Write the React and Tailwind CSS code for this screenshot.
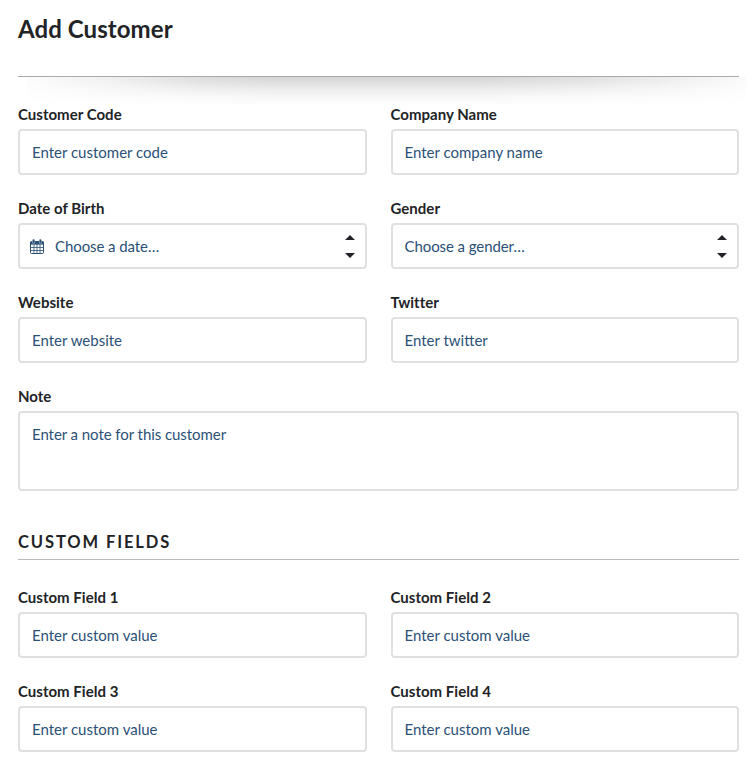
const inputClass =
  "block w-full rounded border-2 border-[#e0e0e0] bg-white px-3 text-[15px] text-[#2b5177] outline-none placeholder:text-[#2b5177] placeholder:opacity-100"

function Label({ children }) {
  return <div className="h-[23px] text-[15px] leading-[17px] font-bold tracking-[0.02px] text-[#222326]">{children}</div>
}

function Field({ label, placeholder }) {
  return (
    <label className="block">
      <Label>{label}</Label>
      <input type="text" placeholder={placeholder} className={`${inputClass} h-[46px]`} />
    </label>
  )
}

function CalendarIcon() {
  return (
    <svg width="14" height="15" viewBox="0 0 14 15" fill="none" stroke="#2b5177" className="mr-[11px] -ml-[2px] shrink-0">
      <rect x=".5" y="2.5" width="13" height="12" rx="1" />
      <path d="M1 8.5h12M1 11.5h12M4 5v9.5M7 5v9.5M10 5v9.5" strokeWidth=".8" />
      <path d="M.3 2.6h13.4v3H.3z" fill="#2b5177" stroke="none" />
      <path d="M3.6 1.4v2M10.4 1.4v2" stroke="#a9b9c9" strokeWidth="2.8" strokeLinecap="round" />
      <path d="M3.6 1.3v2M10.4 1.3v2" strokeWidth="1.7" strokeLinecap="round" />
    </svg>
  )
}

function SelectField({ label, placeholder, icon }) {
  return (
    <div>
      <Label>{label}</Label>
      <button type="button" className={`${inputClass} h-[46px]`}>
        <span className="flex items-center">
          {icon}
          <span className="tracking-[-0.08px]">{placeholder}</span>
          <svg width="10" height="24" viewBox="0 0 10 24" fill="#222326" className="-mr-[2px] ml-auto">
            <path d="M0 6l5-5 5 5zM0 19l5 5 5-5z" />
          </svg>
        </span>
      </button>
    </div>
  )
}

export default function App() {
  return (
    <div className="min-h-screen bg-white pr-[14px] pl-[18px] font-['Lato',sans-serif] text-[#222326]">
      <header className="h-[77px] border-b border-[#aaa] pt-[13px]">
        <h1 className="text-2xl leading-[32px] font-bold tracking-[0.08px]">Add Customer</h1>
      </header>
      {/* Soft shadow under the header line, fading out at both ends */}
      <div className="-mr-[7px] h-[29px] pl-2">
        <div className="h-[29px] bg-[linear-gradient(#d5d5d5_0%,#e0e0e0_22%,#eeeeee_45%,#f8f8f8_70%,#fff_100%)] mask-[linear-gradient(to_right,rgba(0,0,0,0.08)_0%,rgba(0,0,0,0.4)_12%,rgba(0,0,0,0.85)_25%,#000_35%,#000_62%,rgba(0,0,0,0.75)_78%,rgba(0,0,0,0.35)_92%,rgba(0,0,0,0.12)_100%)]" />
      </div>

      <div className="grid grid-cols-2 gap-x-6 gap-y-[25px]">
        <Field label="Customer Code" placeholder="Enter customer code" />
        <Field label="Company Name" placeholder="Enter company name" />
        <SelectField label="Date of Birth" placeholder="Choose a date…" icon={<CalendarIcon />} />
        <SelectField label="Gender" placeholder="Choose a gender…" />
        <Field label="Website" placeholder="Enter website" />
        <Field label="Twitter" placeholder="Enter twitter" />
        <label className="col-span-2 block">
          <Label>Note</Label>
          <textarea placeholder="Enter a note for this customer" className={`${inputClass} h-20 resize-none py-3 leading-[18px] tracking-[-0.06px]`} />
        </label>
      </div>

      <h2 className="mt-[40px] mb-[29px] h-[29px] border-b border-[#bbb] text-[16.5px] leading-[22px] font-bold tracking-[1.9px]">CUSTOM FIELDS</h2>

      <div className="grid grid-cols-2 gap-x-6 gap-y-[25px]">
        {[1, 2, 3, 4].map((n) => (
          <Field key={n} label={`Custom Field ${n}`} placeholder="Enter custom value" />
        ))}
      </div>
    </div>
  )
}
